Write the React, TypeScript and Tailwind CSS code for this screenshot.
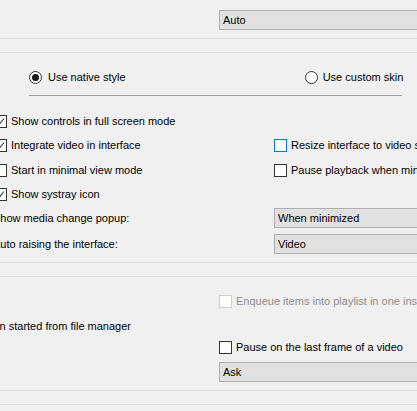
import React from "react";

function Check({ checked = false, focus = false, disabled = false }: { checked?: boolean; focus?: boolean; disabled?: boolean }) {
  const border = focus ? "border-[#0078d7]" : disabled ? "border-[#cccccc]" : "border-[#333333]";
  return (
    <div className={`w-[13px] h-[13px] shrink-0 border ${border} bg-white flex items-center justify-center`}>
      {checked && (
        <svg width="11" height="11" viewBox="0 0 11 11">
          <path d="M2 5.5 L4.5 8 L9 2.5" fill="none" stroke="#333333" strokeWidth="1.1" />
        </svg>
      )}
    </div>
  );
}

function Radio({ checked = false }: { checked?: boolean }) {
  return (
    <div className="w-[13px] h-[13px] shrink-0 rounded-full border border-[#333333] bg-white flex items-center justify-center">
      {checked && <div className="w-[7px] h-[7px] rounded-full bg-[#1a1a1a]" />}
    </div>
  );
}

function Combo({ text, width = 240 }: { text: string; width?: number }) {
  return (
    <div
      className="h-[20px] shrink-0 border border-[#adadad] bg-[#e1e1e1] flex items-center pl-[3px] whitespace-nowrap"
      style={{ width }}
    >
      {text}
    </div>
  );
}

function CheckRow({ label, checked, focus, disabled }: { label: string; checked?: boolean; focus?: boolean; disabled?: boolean }) {
  return (
    <div className="flex items-center h-[13px] whitespace-nowrap shrink-0">
      <Check checked={checked} focus={focus} disabled={disabled} />
      <span className={`ml-[4px] shrink-0 ${disabled ? "text-[#8d8d8d]" : ""}`}>{label}</span>
    </div>
  );
}

export default function App() {
  return (
    <div
      className="w-[417px] h-[411px] overflow-hidden bg-[#f0f0f0] text-black text-[11px] leading-[13px]"
      style={{ fontFamily: '"Liberation Sans", Arial, sans-serif' }}
    >
      <div className="flex flex-col w-[417px]">
        {/* Top combo */}
        <div className="flex pt-[10px] pl-[219px]">
          <Combo text="Auto" />
        </div>
        <div className="mt-[8px] h-px bg-[#dcdcdc]" />
        <div className="mt-[13px] h-px bg-[#dcdcdc]" />

        {/* Radio row */}
        <div className="mt-[18px] flex items-center h-[13px] whitespace-nowrap">
          <div className="ml-[29px] flex items-center shrink-0">
            <Radio checked />
            <span className="ml-[6px]">Use native style</span>
          </div>
          <div className="ml-[179px] flex items-center shrink-0">
            <Radio />
            <span className="ml-[5px]">Use custom skin</span>
          </div>
        </div>
        <div className="mt-[11px] ml-[29px] w-[373px] h-px bg-[#a0a0a0]" />

        {/* Checkbox grid */}
        <div className="mt-[19px] flex flex-col ml-[-6px]">
          <div className="flex h-[13px]">
            <div className="w-[280px] shrink-0">
              <CheckRow label="Show controls in full screen mode" checked />
            </div>
          </div>
          <div className="flex mt-[11px] h-[13px]">
            <div className="w-[280px] shrink-0">
              <CheckRow label="Integrate video in interface" checked />
            </div>
            <CheckRow label="Resize interface to video size" focus />
          </div>
          <div className="flex mt-[12px] h-[13px]">
            <div className="w-[280px] shrink-0">
              <CheckRow label="Start in minimal view mode" />
            </div>
            <CheckRow label="Pause playback when minimized" />
          </div>
          <div className="flex mt-[11px] h-[13px]">
            <div className="w-[280px] shrink-0">
              <CheckRow label="Show systray icon" checked />
            </div>
          </div>
        </div>

        {/* Label + combos */}
        <div className="mt-[7px] flex items-center h-[20px] whitespace-nowrap ml-[-7px]">
          <span className="w-[281px] shrink-0">Show media change popup:</span>
          <Combo text="When minimized" width={200} />
        </div>
        <div className="mt-[6px] flex items-center h-[20px] whitespace-nowrap ml-[-7px]">
          <span className="w-[281px] shrink-0">Auto raising the interface:</span>
          <Combo text="Video" width={200} />
        </div>
        <div className="mt-[8px] h-px bg-[#dcdcdc]" />
        <div className="mt-[13px] h-px bg-[#dcdcdc]" />

        {/* Playlist section */}
        <div className="mt-[18px] ml-[219px] flex">
          <CheckRow label="Enqueue items into playlist in one instance mode" disabled />
        </div>
        <div className="mt-[12px] h-[13px] flex">
          <div className="w-[131px] shrink-0 overflow-hidden flex justify-end whitespace-nowrap">
            <span className="shrink-0">Use only one instance when started from file manager</span>
          </div>
        </div>
        <div className="mt-[8px] ml-[219px] flex">
          <CheckRow label="Pause on the last frame of a video" />
        </div>
        <div className="mt-[8px] flex pl-[219px]">
          <Combo text="Ask" />
        </div>
        <div className="mt-[8px] h-px bg-[#dcdcdc]" />
        <div className="mt-[13px] h-px bg-[#dcdcdc]" />
      </div>
    </div>
  );
}
